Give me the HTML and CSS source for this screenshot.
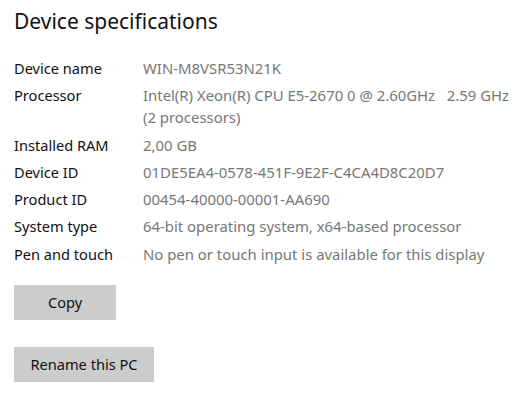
FILE: index.html
```html
<!DOCTYPE html>
<html lang="en">
<head>
<meta charset="utf-8">
<title>About</title>
<link rel="stylesheet" href="styles.css">
</head>
<body>
  <section class="specs">
    <h2 class="specs-title">Device specifications</h2>
    <dl class="spec-list">
      <dt>Device name</dt>
      <dd>WIN-M8VSR53N21K</dd>
      <dt>Processor</dt>
      <dd><span class="line">Intel(R) Xeon(R) CPU E5-2670 0 @ 2.60GHz&nbsp;&nbsp;&nbsp;2.59 GHz</span><span class="line">(2 processors)</span></dd>
      <dt>Installed RAM</dt>
      <dd>2,00 GB</dd>
      <dt>Device ID</dt>
      <dd>01DE5EA4-0578-451F-9E2F-C4CA4D8C20D7</dd>
      <dt>Product ID</dt>
      <dd>00454-40000-00001-AA690</dd>
      <dt>System type</dt>
      <dd>64-bit operating system, x64-based processor</dd>
      <dt>Pen and touch</dt>
      <dd>No pen or touch input is available for this display</dd>
    </dl>
    <div class="actions">
      <button class="btn btn-copy" type="button">Copy</button>
      <button class="btn btn-rename" type="button">Rename this PC</button>
    </div>
  </section>
</body>
</html>
```

FILE: styles.css
```css
html, body {
  margin: 0;
  padding: 0;
  background: #ffffff;
}

body {
  font-family: "Noto Sans", "Open Sans", sans-serif;
  color: #000000;
}

.specs {
  padding: 6px 14px 0 14px;
}

.specs-title {
  margin: 0;
  font-size: 21px;
  font-weight: 400;
  line-height: 30px;
  color: #111111;
}

.spec-list {
  display: grid;
  grid-template-columns: 129px 1fr;
  row-gap: 5.3px;
  margin: 21px 0 0 0;
  font-size: 14.6px;
  line-height: 22px;
}

.spec-list dt {
  margin: 0;
  color: #111111;
}

.spec-list dd {
  margin: 0;
  font-size: 14.9px;
  color: #777777;
  white-space: nowrap;
}

.spec-list .line {
  display: block;
}

.actions {
  display: flex;
  flex-direction: column;
  align-items: flex-start;
  gap: 27px;
  margin-top: 20px;
}

.btn {
  font-family: inherit;
  font-size: 14.6px;
  color: #111111;
  background: #cccccc;
  border: none;
  border-radius: 0;
  height: 35px;
  padding: 0 12px;
  margin: 0;
}

.btn-copy {
  width: 102px;
}

.btn-rename {
  width: 140px;
}
```
